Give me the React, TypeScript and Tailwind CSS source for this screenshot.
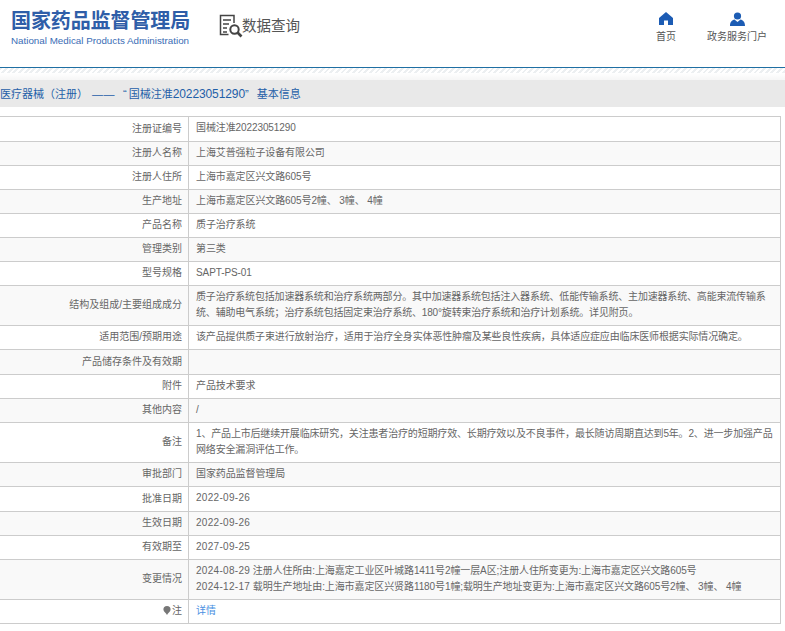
import React from 'react';

type Row = { label: React.ReactNode; value?: React.ReactNode; tall?: boolean; h?: string; track?: string };

const rows: Row[] = [
  { label: '注册证编号', value: '国械注准20223051290', h: 'h-[25px]' },
  { label: '注册人名称', value: '上海艾普强粒子设备有限公司' },
  { label: '注册人住所', value: '上海市嘉定区兴文路605号' },
  { label: '生产地址', value: '上海市嘉定区兴文路605号2幢、 3幢、 4幢' },
  { label: '产品名称', value: '质子治疗系统' },
  { label: '管理类别', value: '第三类' },
  { label: '型号规格', value: 'SAPT-PS-01' },
  {
    label: '结构及组成/主要组成成分',
    tall: true,
    track: 'tracking-[-0.18px]',
    value: (
      <>
        质子治疗系统包括加速器系统和治疗系统两部分。其中加速器系统包括注入器系统、低能传输系统、主加速器系统、高能束流传输系
        <br />
        统、辅助电气系统；治疗系统包括固定束治疗系统、180°旋转束治疗系统和治疗计划系统。详见附页。
      </>
    ),
  },
  {
    label: '适用范围/预期用途',
    track: 'tracking-[-0.15px]',
    value: '该产品提供质子束进行放射治疗，适用于治疗全身实体恶性肿瘤及某些良性疾病，具体适应症应由临床医师根据实际情况确定。',
  },
  { label: '产品储存条件及有效期', value: '', h: 'h-[25px]' },
  { label: '附件', value: '产品技术要求' },
  { label: '其他内容', value: '/' },
  {
    label: '备注',
    tall: true,
    track: 'tracking-[-0.17px]',
    value: (
      <>
        1、产品上市后继续开展临床研究，关注患者治疗的短期疗效、长期疗效以及不良事件，最长随访周期直达到5年。2、进一步加强产品
        <br />
        网络安全漏洞评估工作。
      </>
    ),
  },
  { label: '审批部门', value: '国家药品监督管理局' },
  { label: '批准日期', value: '2022-09-26', h: 'h-[25px]', track: 'tracking-[0.3px]' },
  { label: '生效日期', value: '2022-09-26', track: 'tracking-[0.3px]' },
  { label: '有效期至', value: '2027-09-25', track: 'tracking-[0.3px]' },
  {
    label: '变更情况',
    tall: true,
    value: (
      <>
        <span className="tracking-[0.3px]">2024-08-29</span> 注册人住所由:上海嘉定工业区叶城路1411号2幢一层A区;注册人住所变更为:上海市嘉定区兴文路605号
        <br />
        <span className="tracking-[0.3px]">2024-12-17</span> 载明生产地址由:上海市嘉定区兴贤路1180号1幢;载明生产地址变更为:上海市嘉定区兴文路605号2幢、 3幢、 4幢
      </>
    ),
  },
  {
    label: (
      <span className="inline-flex items-center gap-px">
        <svg viewBox="0 0 8 9" className="w-2 h-[9px]" fill="#777">
          <path d="M4 0a3.6 3.6 0 0 1 3.6 3.6C7.6 5.6 5 7 4 9 3 7 .4 5.6.4 3.6A3.6 3.6 0 0 1 4 0z" />
        </svg>
        注
      </span>
    ),
    value: <span className="text-[#4a90e2]">详情</span>,
  },
];

const App: React.FC = () => {
  return (
    <div className="w-[785px] h-[631px] overflow-hidden bg-white font-['Liberation_Sans','Noto_Sans_CJK_SC',sans-serif]">
      <header className="h-[67px] flex items-start">
        <div className="pl-[11px] pt-[7px] w-[219px]">
          <div className="text-[20px] leading-[28px] font-bold tracking-[-0.1px] text-[#2f5ea8] whitespace-nowrap">国家药品监督管理局</div>
          <div className="text-[9.8px] leading-[12px] text-[#3a6db5] whitespace-nowrap">National Medical Products Administration</div>
        </div>
        <div className="flex items-center pt-[14px]">
          <svg viewBox="0 0 24 24" className="w-6 h-6" fill="none" stroke="#444" strokeWidth="1.5">
            <path d="M15 9V1.500H1.500v19h8" />
            <path d="M4 6h8M4 10h6M4 14h4M4 18h4" />
            <circle cx="15.500" cy="15.500" r="4.200" strokeWidth="2" />
            <path d="M18.500 18.500l4 4" strokeWidth="2.600" />
          </svg>
          <span className="text-[14.5px] leading-[24px] text-[#555] ml-[-1px]">数据查询</span>
        </div>
        <nav className="ml-auto flex pt-[12px] pr-[18px] text-[10px] text-[#555]">
          <div className="flex flex-col items-center w-[20px] mr-[31px]">
            <svg viewBox="0 0 14 13" className="w-[14px] h-[13px]" fill="#1c5cb4">
              <path d="M7 0l7 6v7H9V8.500H5V13H0V6z" />
            </svg>
            <span className="leading-[14px] mt-[5px] whitespace-nowrap">首页</span>
          </div>
          <div className="flex flex-col items-center w-[60px]">
            <svg viewBox="0 0 15 14" className="w-[15px] h-[14px]" fill="#1c5cb4">
              <circle cx="7.500" cy="4" r="3.600" />
              <path d="M0 14c0-4 2-6 4.500-6.500L7.500 10l3-2.500C13 8 15 10 15 14z" />
            </svg>
            <span className="leading-[14px] mt-[4px] whitespace-nowrap">政务服务门户</span>
          </div>
        </nav>
      </header>

      <div className="h-[13px]">
        <div className="h-px bg-[#1f6fa3]" />
        <div className="h-[5px] bg-[repeating-linear-gradient(135deg,#eceff1_0,#eceff1_2px,#fff_2px,#fff_4px)]" />
        <div className="h-[7px] bg-gradient-to-b from-white to-[#f6f6f6]" />
      </div>

      <div className="h-[27px] pt-px bg-[#e9e9e9] flex items-center text-[11px] text-[#1f5fa8] whitespace-pre">
        <span>医疗器械（注册）</span>
        <span className="ml-[4px] tracking-[0.5px]">——</span>
        <span className="ml-[8px]">“</span>
        <span className="ml-[2px]">国械注准</span>
        <span className="text-[12px] tracking-[-0.1px]">20223051290</span>
        <span>”</span>
        <span className="ml-[8px]">基本信息</span>
      </div>

      <div className="mt-[9px] w-[781px] border-t border-r border-[#ccc] text-[10px] text-[#666]">
        {rows.map((row, i) => (
          <div
            key={i}
            className={`grid grid-cols-[189px_1fr] border-b border-[#ccc] ${row.tall ? 'h-[40px]' : row.h || 'h-[24px]'} ${i % 2 === 1 ? 'bg-[#f9f9f9]' : 'bg-white'}`}
          >
            <div className="flex items-center justify-end pr-[6px] pb-[2px] border-r border-[#ccc] whitespace-nowrap">{row.label}</div>
            <div className="flex items-center pl-[7px] pr-1 pb-[2px] leading-[16px]">
              <div className={row.track || 'tracking-[-0.1px]'}>{row.value}</div>
            </div>
          </div>
        ))}
      </div>
    </div>
  );
};

export default App;
